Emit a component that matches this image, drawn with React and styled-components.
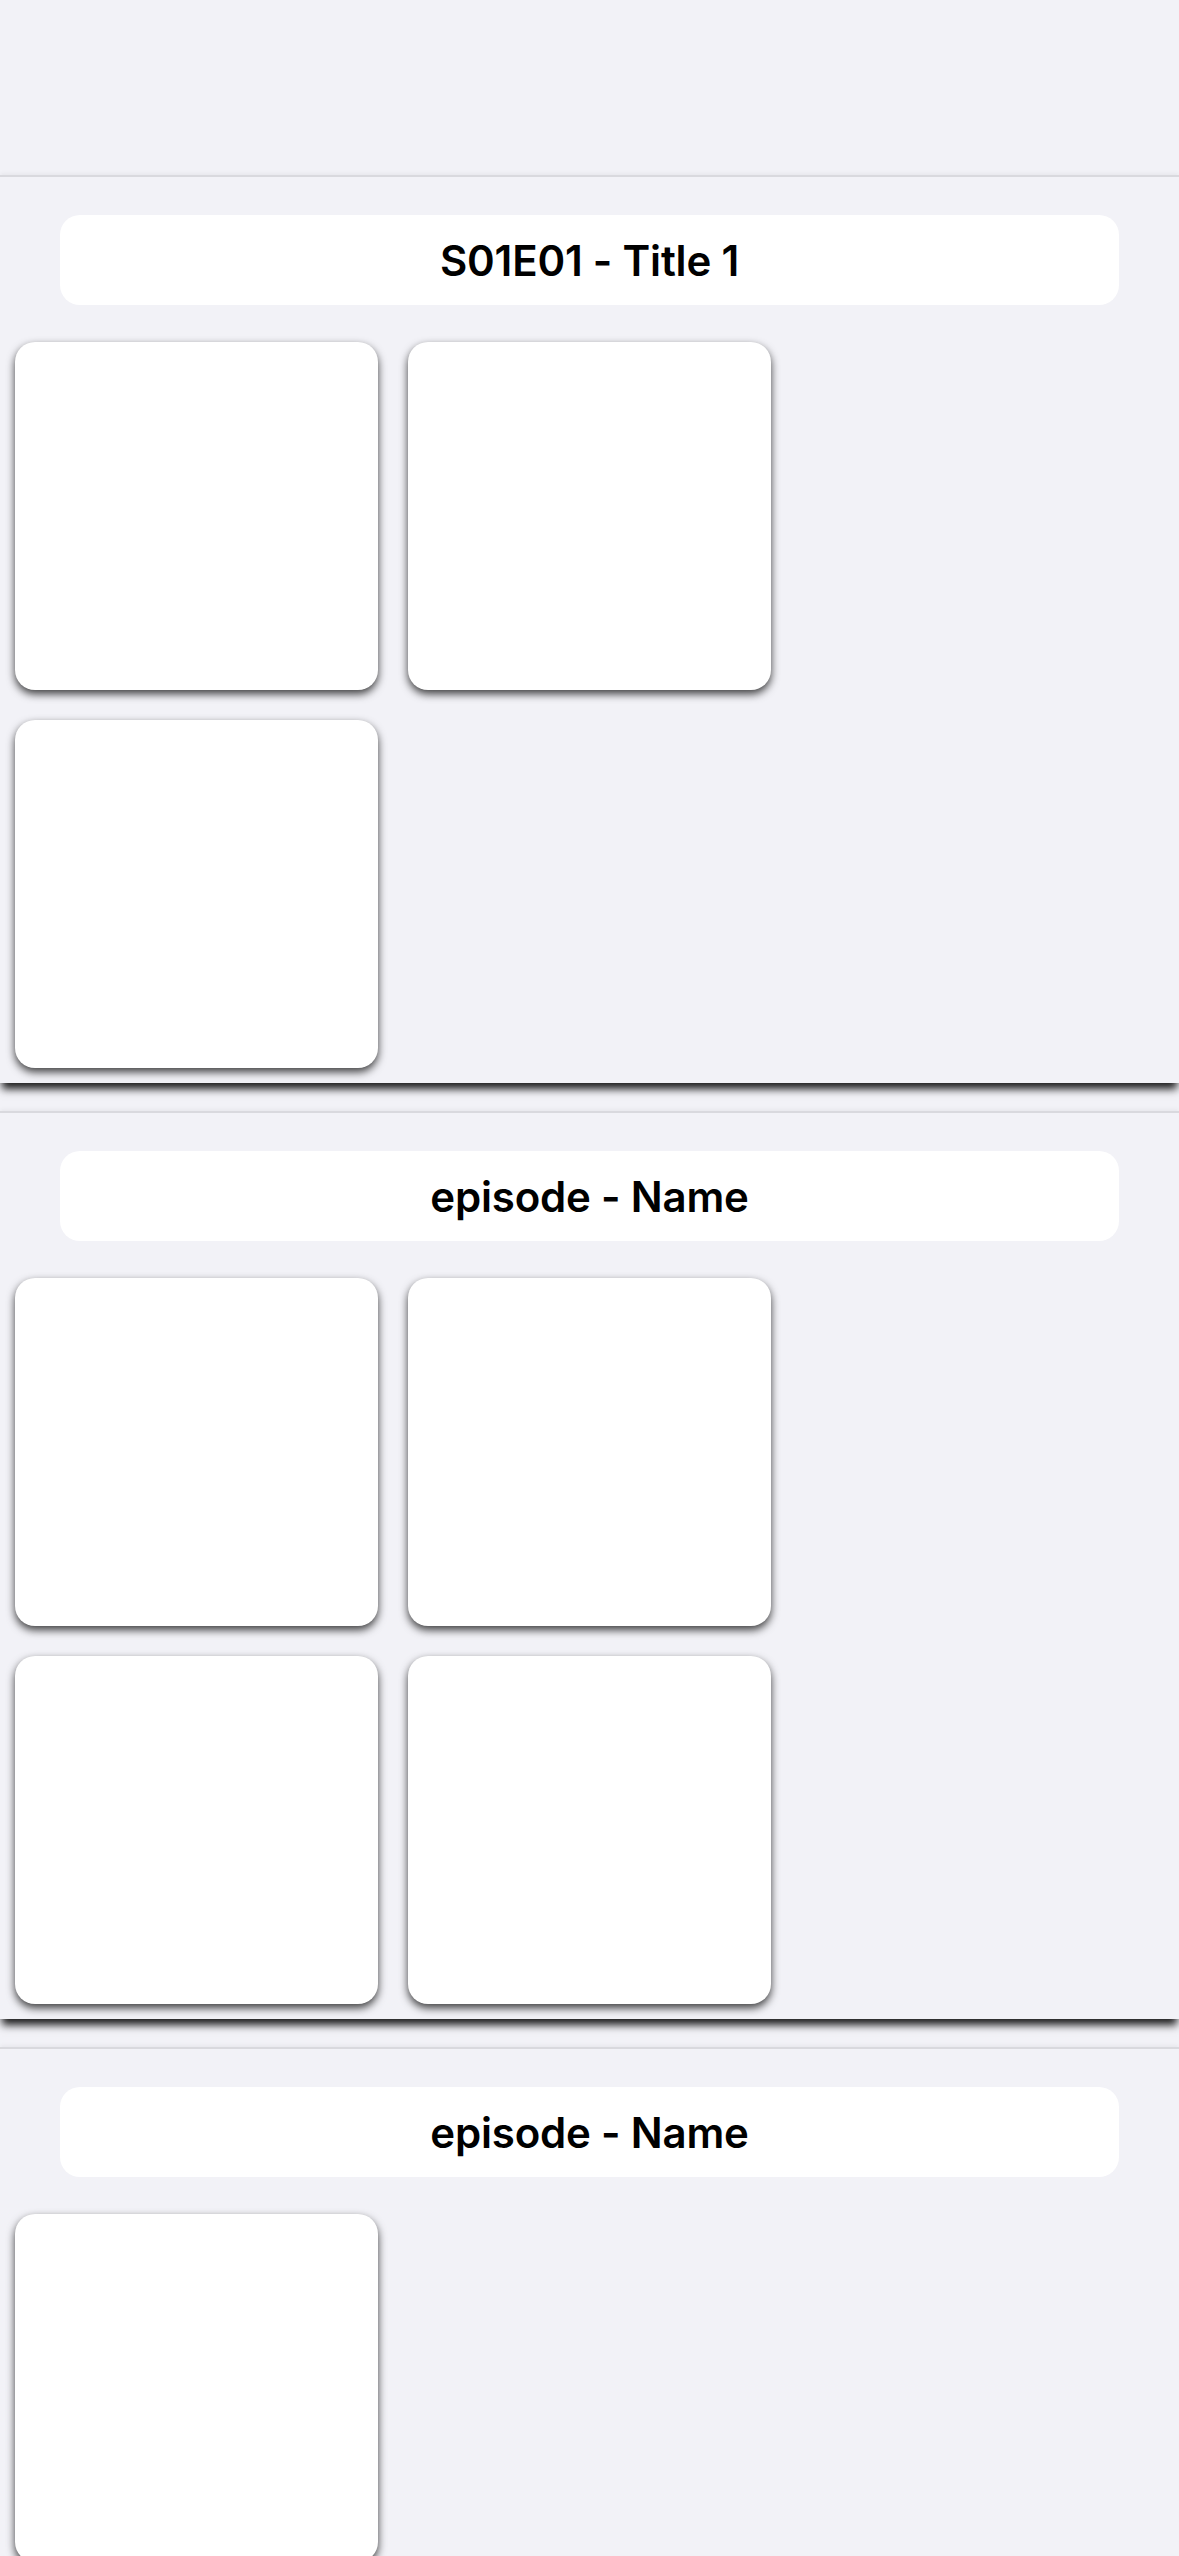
import React from "react"
import styled, { createGlobalStyle } from "styled-components"

const GlobalStyle = createGlobalStyle`
  html, body {
    margin: 0;
    padding: 0;
    background: #f2f2f7;
  }
  body {
    font-family: Inter, "Noto Sans", "Liberation Sans", sans-serif;
    color: #000;
  }
`

const episodes = [
  { title: "S01E01 - Title 1", cards: 3 },
  { title: "episode - Name", cards: 4 },
  { title: "episode - Name", cards: 1 },
]

const App = () => {
  return (
    <Page>
      <GlobalStyle />
      <TopBar />
      <List>
        {episodes.map((ep, i) => (
          <Section key={i}>
            <TitlePill>{ep.title}</TitlePill>
            <CardGrid>
              {Array.from({ length: ep.cards }).map((_, j) => (
                <Card key={j} />
              ))}
            </CardGrid>
          </Section>
        ))}
      </List>
    </Page>
  )
}

export default App

const Page = styled.div`
  min-height: 2556px;
  background: #f2f2f7;
  overflow: hidden;
`

const TopBar = styled.div`
  height: 175px;
`

const List = styled.div`
  display: flex;
  flex-direction: column;
  gap: 28px;
`

const Section = styled.section`
  position: relative;
  background: #f2f2f7;
  border-top: 2px solid #d9d9de;
  padding: 38px 0 15px;
  box-shadow: 0 8px 8px -2px rgba(0, 0, 0, 0.88),
    0 -2px 4px rgba(0, 0, 0, 0.04);
`

const TitlePill = styled.h2`
  margin: 0 60px;
  height: 90px;
  display: flex;
  align-items: center;
  justify-content: center;
  background: #fff;
  border-radius: 20px;
  font-size: 42px;
  font-weight: 600;
  letter-spacing: -0.2px;
`

const CardGrid = styled.div`
  display: grid;
  grid-template-columns: repeat(2, 363px);
  gap: 30px;
  padding: 0 15px;
  margin-top: 37px;
`

const Card = styled.div`
  height: 348px;
  background: #fff;
  border-radius: 20px;
  box-shadow: 0 4px 8px rgba(0, 0, 0, 0.75);
`
